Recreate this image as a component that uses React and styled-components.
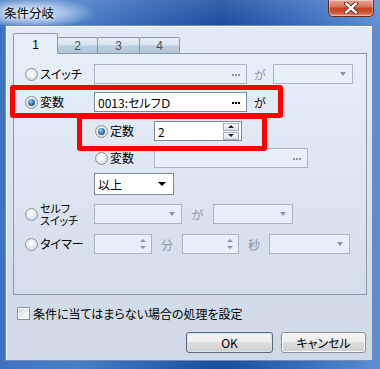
import React from 'react';
import styled, { createGlobalStyle } from 'styled-components';

const GlobalStyle = createGlobalStyle`
  html, body { margin: 0; padding: 0; }
  body {
    width: 380px;
    height: 369px;
    overflow: hidden;
    font-family: "Noto Sans CJK JP", "Noto Sans", sans-serif;
    font-feature-settings: "palt";
  }
`;

function Dialog() {
  return (
    <Window>
      <TitleBar>
        <Title>条件分岐</Title>
        <CloseButton>
          <svg width="16" height="12" viewBox="0 0 16 12">
            <path d="M3 1.5 L13 10.5 M13 1.5 L3 10.5" stroke="#5a1f14" strokeWidth="4.2" strokeLinecap="round" />
            <path d="M3 1.5 L13 10.5 M13 1.5 L3 10.5" stroke="#fff" strokeWidth="2.4" strokeLinecap="round" />
          </svg>
        </CloseButton>
      </TitleBar>

      <Client>
        <TabStrip>
          <Tab $active $w={45}>1</Tab>
          <Tab $w={41}>2</Tab>
          <Tab $w={43}>3</Tab>
          <Tab $w={41}>4</Tab>
        </TabStrip>

        <Panel>
          <Row $top={10}>
            <Option $w={69}><Radio /><Label>スイッチ</Label></Option>
            <Field $w={153}><Value /><Dots /></Field>
            <Joiner $w={26} $off>が</Joiner>
            <Field $w={80}><Value /><Arrow /></Field>
          </Row>

          <Row $top={8}>
            <Option $w={69}><Radio $checked /><Label>変数</Label></Option>
            <Field $w={153} $on><Value>0013:セルフＤ</Value><Dots $on /></Field>
            <Joiner $w={26}>が</Joiner>
          </Row>

          <Row $top={9} $indent={70}>
            <Option $w={59}><Radio $checked /><Label>定数</Label></Option>
            <Field $w={88} $on><Value>2</Value><SpinButtons /></Field>
          </Row>

          <Row $top={7} $indent={70}>
            <Option $w={59}><Radio /><Label>変数</Label></Option>
            <Field $w={154}><Value /><Dots /></Field>
          </Row>

          <Row $top={5} $indent={69} $h={22}>
            <Field $w={80} $h={22} $on><Value>以上</Value><Arrow $on /></Field>
          </Row>

          <Row $top={9}>
            <Option $w={69}><Radio /><Label $two>セルフ<br />スイッチ</Label></Option>
            <Field $w={88}><Value /><Arrow /></Field>
            <Joiner $w={31} $off>が</Joiner>
            <Field $w={80}><Value /><Arrow /></Field>
          </Row>

          <Row $top={10}>
            <Option $w={69}><Radio /><Label>タイマー</Label></Option>
            <Field $w={58}><Value /><SpinArrows /></Field>
            <Joiner $w={30} $off>分</Joiner>
            <Field $w={57}><Value /><SpinArrows /></Field>
            <Joiner $w={30} $off>秒</Joiner>
            <Field $w={81}><Value /><Arrow /></Field>
          </Row>
        </Panel>

        <CheckRow>
          <CheckBox />
          <span>条件に当てはまらない場合の処理を設定</span>
        </CheckRow>

        <ButtonRow>
          <Button $w={87} $default>OK</Button>
          <Button $w={85}>キャンセル</Button>
        </ButtonRow>
      </Client>

      <Highlight $x={10} $y={85} $w={273} $h={33} />
      <Highlight $x={77} $y={114} $w={190} $h={37} />
    </Window>
  );
}

function SpinButtons() {
  return (
    <SpinStack>
      <SpinBtn><Tri $up /></SpinBtn>
      <SpinBtn><Tri /></SpinBtn>
    </SpinStack>
  );
}

function SpinArrows() {
  return (
    <SpinStack $bare>
      <Tri $up $off />
      <Tri $off />
    </SpinStack>
  );
}

export default function App() {
  return (
    <>
      <GlobalStyle />
      <Dialog />
    </>
  );
}

const Window = styled.div`
  position: relative;
  width: 380px;
  height: 369px;
  display: flex;
  flex-direction: column;
  box-sizing: border-box;
  background:
    linear-gradient(180deg, rgba(255,255,255,0.12) 0px, rgba(255,255,255,0) 25px),
    linear-gradient(90deg, #3f73c0 0%, #4a7dc6 20%, #2a5cab 45%, #1b4c9d 58%, #3a6dbb 80%, #5f8fd2 100%);
`;

const TitleBar = styled.div`
  height: 25px;
  flex: none;
  display: flex;
  align-items: flex-start;
  background: radial-gradient(ellipse 64px 16px at 32px 13px, rgba(222,235,250,0.95) 0%, rgba(190,212,240,0.7) 55%, rgba(190,212,240,0) 100%);
`;

const Title = styled.div`
  margin: 6px 0 0 4px;
  font-size: 12.5px;
  line-height: 14px;
  color: #000;
  text-shadow: 0 0 6px #e8f1fc, 0 0 3px #fff;
`;

const CloseButton = styled.div`
  margin-left: auto;
  margin-right: 6px;
  width: 46px;
  height: 17px;
  box-sizing: border-box;
  border: 1px solid #6b2a1c;
  border-top: none;
  border-radius: 0 0 5px 5px;
  background: linear-gradient(180deg, #e8a99a 0%, #d8745e 40%, #c4401f 55%, #cf5b3c 80%, #e39a7e 100%);
  box-shadow: inset 0 0 0 1px rgba(255,255,255,0.35);
  display: flex;
  align-items: center;
  justify-content: center;
`;

const Client = styled.div`
  flex: 1;
  margin: 0 7px 8px 5px;
  border: 1px solid #6f8db8;
  box-shadow: inset 1px 1px 0 #f4f8fd;
  background: linear-gradient(180deg, #e2eaf5 0%, #d9e3ef 50%, #cfd9e6 100%);
  padding: 7px 5px 0 7px;
  display: flex;
  flex-direction: column;
`;

const TabStrip = styled.div`
  display: flex;
  align-items: flex-end;
  height: 21px;
  margin-bottom: -1px;
  position: relative;
  z-index: 1;
`;

const Tab = styled.div`
  width: ${p => p.$w}px;
  height: ${p => (p.$active ? 21 : 17)}px;
  box-sizing: border-box;
  border: 1px solid #8a99ae;
  border-bottom: ${p => (p.$active ? 'none' : '1px solid #8a99ae')};
  margin-left: ${p => (p.$active ? 0 : -1)}px;
  border-radius: 2px 2px 0 0;
  background: ${p => (p.$active
    ? '#e6eef8'
    : 'linear-gradient(180deg, #e9f0f8 0%, #d6e2ee 45%, #bccddf 55%, #b3c6da 100%)')};
  color: ${p => (p.$active ? '#000' : '#4a4f57')};
  font-family: "Liberation Sans", sans-serif;
  font-size: 12px;
  display: flex;
  align-items: center;
  justify-content: center;
  padding-top: ${p => (p.$active ? 1 : 0)}px;
`;

const Panel = styled.div`
  height: 242px;
  box-sizing: border-box;
  border: 1px solid #8a99ae;
  background: linear-gradient(180deg, #e6eef8 0%, #dde6f1 50%, #d3dde9 100%);
  padding-left: 11px;
  display: flex;
  flex-direction: column;
`;

const Row = styled.div`
  display: flex;
  align-items: center;
  height: ${p => p.$h || 20}px;
  margin-top: ${p => p.$top}px;
  padding-left: ${p => p.$indent || 0}px;
`;

const Option = styled.div`
  width: ${p => p.$w}px;
  flex: none;
  display: flex;
  align-items: center;
  gap: 1px;
`;

const Radio = styled.span`
  width: 13px;
  height: 13px;
  flex: none;
  box-sizing: border-box;
  border-radius: 50%;
  border: 1px solid #8e949b;
  background: radial-gradient(circle at 45% 40%, #ffffff 0%, #eceff2 40%, #c9ced4 100%);
  display: flex;
  align-items: center;
  justify-content: center;
  &::after {
    content: '';
    display: ${p => (p.$checked ? 'block' : 'none')};
    width: 7px;
    height: 7px;
    border-radius: 50%;
    background: radial-gradient(circle at 40% 35%, #a9ddf8 0%, #3b86b8 40%, #163c5e 100%);
  }
`;

const Label = styled.span`
  font-size: ${p => (p.$two ? 11 : 12)}px;
  line-height: 12px;
  color: #000;
  margin-left: 1px;
  white-space: nowrap;
`;

const Field = styled.div`
  width: ${p => p.$w}px;
  height: ${p => p.$h || 20}px;
  flex: none;
  box-sizing: border-box;
  border: 1px solid ${p => (p.$on ? '#7c8a9b' : '#a9b6c6')};
  background: ${p => (p.$on ? '#fff' : '#e7eff9')};
  display: flex;
  align-items: center;
  padding: 0 4px 0 3px;
`;

const Value = styled.span`
  flex: 1;
  font-size: 12px;
  color: #000;
  white-space: nowrap;
`;

const Dots = styled.span`
  width: 8px;
  height: 2px;
  margin-right: 2px;
  margin-top: 2px;
  position: relative;
  &::before {
    content: '';
    position: absolute;
    left: 0;
    top: 0;
    width: 2px;
    height: 2px;
    background: ${p => (p.$on ? '#000' : '#8a96a6')};
    box-shadow: 3px 0 ${p => (p.$on ? '#000' : '#8a96a6')}, 6px 0 ${p => (p.$on ? '#000' : '#8a96a6')};
  }
`;

const Arrow = styled.span`
  width: 0;
  height: 0;
  margin-right: ${p => (p.$on ? 3 : 2)}px;
  border-left: ${p => (p.$on ? 4 : 3.5)}px solid transparent;
  border-right: ${p => (p.$on ? 4 : 3.5)}px solid transparent;
  border-top: 4px solid ${p => (p.$on ? '#000' : '#8a96a6')};
`;

const SpinStack = styled.div`
  display: flex;
  flex-direction: column;
  align-items: center;
  gap: ${p => (p.$bare ? 4 : 1)}px;
  margin-right: ${p => (p.$bare ? 1 : -2)}px;
`;

const SpinBtn = styled.div`
  width: 16px;
  height: 8px;
  box-sizing: border-box;
  border: 1px solid #a3acb8;
  background: linear-gradient(180deg, #f7f9fb, #dde3ea);
  display: flex;
  align-items: center;
  justify-content: center;
`;

const Tri = styled.span`
  width: 0;
  height: 0;
  border-left: 3px solid transparent;
  border-right: 3px solid transparent;
  ${p => (p.$up ? 'border-bottom' : 'border-top')}: 3px solid ${p => (p.$off ? '#8a96a6' : '#222')};
`;

const Joiner = styled.span`
  width: ${p => p.$w}px;
  flex: none;
  text-align: center;
  font-size: 12px;
  color: ${p => (p.$off ? '#8a95a4' : '#000')};
`;

const CheckRow = styled.div`
  display: flex;
  align-items: center;
  gap: 3px;
  margin: 12px 0 0 4px;
  height: 13px;
  font-size: 12px;
  color: #000;
`;

const CheckBox = styled.span`
  width: 13px;
  height: 13px;
  box-sizing: border-box;
  border: 1px solid #8e949b;
  background: linear-gradient(135deg, #d2d6dc 0%, #eef0f3 55%, #ffffff 100%);
  box-shadow: inset 0 0 0 1px #f4f5f7;
  flex: none;
`;

const ButtonRow = styled.div`
  display: flex;
  justify-content: flex-end;
  gap: 8px;
  margin: 12px 1px 0 0;
`;

const Button = styled.div`
  width: ${p => p.$w}px;
  height: 21px;
  box-sizing: border-box;
  border: 1px solid ${p => (p.$default ? '#5c6878' : '#8b9098')};
  border-radius: 3px;
  background: linear-gradient(180deg, #f6f6f6 0%, #ececec 48%, #dcdcdc 52%, #d0d0d0 100%);
  box-shadow: inset 0 0 0 1px ${p => (p.$default ? '#c9e6f5' : '#fbfbfb')};
  display: flex;
  align-items: center;
  justify-content: center;
  font-size: 12px;
  color: #000;
`;

const Highlight = styled.div`
  position: absolute;
  left: ${p => p.$x}px;
  top: ${p => p.$y}px;
  width: ${p => p.$w}px;
  height: ${p => p.$h}px;
  box-sizing: border-box;
  border: 5px solid #ff0000;
  border-radius: 3px;
  pointer-events: none;
`;
